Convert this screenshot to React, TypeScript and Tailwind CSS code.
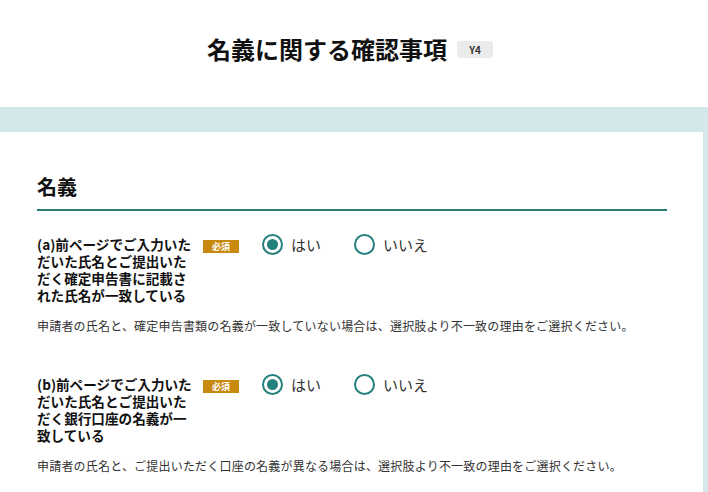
import React from "react";

function Radio({ checked, label }: { checked: boolean; label: string }) {
  return (
    <div className="flex items-center gap-[8px]">
      <span className="w-[21px] h-[21px] rounded-full border-[2px] border-[#24807c] flex items-center justify-center bg-white">
        {checked && <span className="w-[11px] h-[11px] rounded-full bg-[#24807c]" />}
      </span>
      <span className="text-[15px] leading-[20px] text-[#333]">{label}</span>
    </div>
  );
}

function Question({ lines, desc }: { lines: string[]; desc: string }) {
  return (
    <div>
      <div className="flex items-start">
        <div className="w-[155px] text-[13.6px] leading-[17px] font-bold text-[#111] whitespace-nowrap">
          {lines.map((l, i) => (
            <div key={i}>{l}</div>
          ))}
        </div>
        <span className="ml-[11px] mt-[4px] w-[36px] h-[13px] bg-[#c8890f] text-white text-[9px] leading-[13px] font-bold flex items-center justify-center">
          必須
        </span>
        <div className="ml-[23px] mt-[-2px] flex">
          <div className="w-[92px]">
            <Radio checked label="はい" />
          </div>
          <Radio checked={false} label="いいえ" />
        </div>
      </div>
      <p className="mt-[14px] text-[12px] leading-[16px] tracking-[0.2px] text-[#333]">{desc}</p>
    </div>
  );
}

export default function App() {
  return (
    <div
      className="w-[708px] h-[492px] overflow-hidden bg-white"
      style={{ fontFamily: '"Noto Sans CJK JP", "Noto Sans", sans-serif' }}
    >
      <header className="h-[107px] flex items-start justify-center gap-[10px] pt-[33px] pr-[8px]">
        <h1 className="text-[24px] leading-[32px] font-bold text-[#111]">名義に関する確認事項</h1>
        <span className="mt-[8px] w-[36px] h-[17px] rounded-[3px] bg-[#ebebeb] text-[10px] leading-[17px] font-bold text-[#333] flex items-center justify-center">
          Y4
        </span>
      </header>
      <div className="bg-[#d2e8ea] pt-[25px] pr-[5px]">
        <div className="bg-white pl-[37px] pr-[36px] pt-[43px] h-[400px]">
          <h2 className="text-[20px] leading-[24px] font-bold text-[#111]">名義</h2>
          <div className="mt-[10px] h-[2px] bg-[#2b7b79]" />
          <div className="mt-[25px] flex flex-col gap-[42px]">
            <Question
              lines={[
                "(a)前ページでご入力いた",
                "だいた氏名とご提出いた",
                "だく確定申告書に記載さ",
                "れた氏名が一致している",
              ]}
              desc="申請者の氏名と、確定申告書類の名義が一致していない場合は、選択肢より不一致の理由をご選択ください。"
            />
            <Question
              lines={[
                "(b)前ページでご入力いた",
                "だいた氏名とご提出いた",
                "だく銀行口座の名義が一",
                "致している",
              ]}
              desc="申請者の氏名と、ご提出いただく口座の名義が異なる場合は、選択肢より不一致の理由をご選択ください。"
            />
          </div>
        </div>
      </div>
    </div>
  );
}
